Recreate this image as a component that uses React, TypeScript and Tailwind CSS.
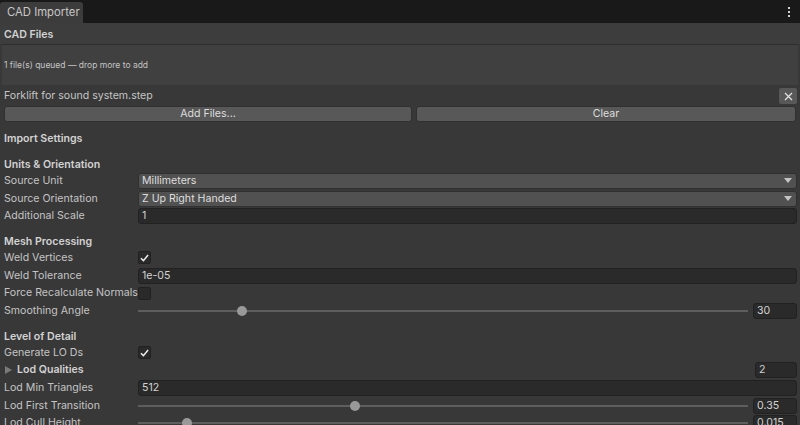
import React from 'react';

const font = { fontFamily: 'Inter, "Noto Sans", sans-serif' };

function Label({ children }: { children: React.ReactNode }) {
  return <div className="w-[134px] shrink-0 whitespace-nowrap text-[#c4c4c4]">{children}</div>;
}

function Header({ children }: { children: React.ReactNode }) {
  return <div className="flex h-[14px] items-center px-1 font-semibold text-[#d2d2d2]">{children}</div>;
}

function Row({ label, children }: { label: string; children: React.ReactNode }) {
  return (
    <div className="flex h-[17.7px] items-center pl-1 pr-[3px]">
      <Label>{label}</Label>
      <div className="flex min-w-0 flex-1 items-center">{children}</div>
    </div>
  );
}

function Dropdown({ value }: { value: string }) {
  return (
    <div className="flex h-[16px] flex-1 items-center justify-between rounded-[3px] border border-[#303030] bg-[#515151] pl-[3px] pr-[4px] text-[#dedede]">
      <span>{value}</span>
      <svg width="8" height="5" viewBox="0 0 8 5">
        <path d="M0 0 L8 0 L4 5 Z" fill="#c4c4c4" />
      </svg>
    </div>
  );
}

function Field({ value, className = 'flex-1' }: { value: string; className?: string }) {
  return (
    <div className={`flex h-[16px] items-center rounded-[3px] border border-[#212121] bg-[#2a2a2a] pl-[3px] text-[#d2d2d2] ${className}`}>
      {value}
    </div>
  );
}

function Check({ on }: { on: boolean }) {
  return (
    <div className="flex h-[13px] w-[13px] items-center justify-center rounded-[2px] border border-[#212121] bg-[#2a2a2a]">
      {on && (
        <svg width="9" height="8" viewBox="0 0 10 9">
          <path d="M1 4.8 L3.8 7.5 L9 1.2" fill="none" stroke="#eeeeee" strokeWidth="1.7" />
        </svg>
      )}
    </div>
  );
}

function Slider({ pct, value }: { pct: number; value: string }) {
  return (
    <div className="flex flex-1 items-center gap-[5px]">
      <div className="relative h-[10px] flex-1">
        <div className="absolute left-0 right-0 top-[4px] h-[2px] bg-[#5e5e5e]" />
        <div
          className="absolute top-0 h-[10px] w-[10px] -translate-x-1/2 rounded-full bg-[#999999]"
          style={{ left: `${pct}%` }}
        />
      </div>
      <Field value={value} className="w-[44px]" />
    </div>
  );
}

export default function App() {
  return (
    <div className="h-[425px] w-[800px] overflow-hidden bg-[#383838] text-[10.6px]" style={font}>
      <div className="flex h-[23px] items-end justify-between bg-[#191919]">
        <div className="flex h-[21px] w-[83px] items-center whitespace-nowrap rounded-t-[3px] bg-[#3c3c3c] pl-[7px] text-[11.3px] text-[#c8c8c8]">
          CAD Importer
        </div>
        <div className="mb-[6px] mr-[10px] flex flex-col gap-[2px]">
          <div className="h-[2px] w-[2px] bg-[#d0d0d0]" />
          <div className="h-[2px] w-[2px] bg-[#d0d0d0]" />
          <div className="h-[2px] w-[2px] bg-[#d0d0d0]" />
        </div>
      </div>

      <div className="flex h-[21px] items-center bg-[#3d3d3d] px-1 pt-[2px] font-semibold text-[#d2d2d2]">CAD Files</div>
      <div className="mx-[2px] flex h-[41px] items-center border-t border-[#2e2e2e] bg-[#404040] px-[2px] text-[8.5px] text-[#c4c4c4]">
        1 file(s) queued — drop more to add
      </div>

      <div className="mt-[2px] flex h-[18px] items-center justify-between pl-1 pr-[3px] text-[#c4c4c4]">
        <span>Forklift for sound system.step</span>
        <div className="flex h-[16px] w-[18px] items-center justify-center rounded-[2px] bg-[#585858]">
          <svg width="9" height="9" viewBox="0 0 9 9">
            <path d="M1 1 L8 8 M8 1 L1 8" stroke="#e0e0e0" strokeWidth="1.3" />
          </svg>
        </div>
      </div>
      <div className="flex gap-[4px] px-1 py-[1px]">
        <div className="flex h-[16px] w-[408px] items-center justify-center rounded-[3px] border border-[#303030] bg-[#585858] text-[#dedede]">
          Add Files...
        </div>
        <div className="flex h-[16px] flex-1 items-center justify-center rounded-[3px] border border-[#303030] bg-[#585858] text-[#dedede]">
          Clear
        </div>
      </div>

      <div className="h-[9px]" />
      <Header>Import Settings</Header>

      <div className="h-[12px]" />
      <Header>Units &amp; Orientation</Header>
      <Row label="Source Unit"><Dropdown value="Millimeters" /></Row>
      <Row label="Source Orientation"><Dropdown value="Z Up Right Handed" /></Row>
      <Row label="Additional Scale"><Field value="1" /></Row>

      <div className="h-[10px]" />
      <Header>Mesh Processing</Header>
      <Row label="Weld Vertices"><Check on /></Row>
      <Row label="Weld Tolerance"><Field value="1e-05" /></Row>
      <Row label="Force Recalculate Normals"><Check on={false} /></Row>
      <Row label="Smoothing Angle"><Slider pct={17} value="30" /></Row>

      <div className="h-[10px]" />
      <Header>Level of Detail</Header>
      <Row label="Generate LO Ds"><Check on /></Row>
      <div className="flex h-[17.7px] items-center pl-1 pr-[3px]">
        <div className="flex flex-1 items-center gap-[5px] font-semibold text-[#d2d2d2]">
          <svg width="7" height="8" viewBox="0 0 7 8" className="ml-[1px]">
            <path d="M0 0 L7 4 L0 8 Z" fill="#7a7a7a" />
          </svg>
          Lod Qualities
        </div>
        <Field value="2" className="w-[42px]" />
      </div>
      <Row label="Lod Min Triangles"><Field value="512" /></Row>
      <Row label="Lod First Transition"><Slider pct={35.5} value="0.35" /></Row>
      <Row label="Lod Cull Height"><Slider pct={8} value="0.015" /></Row>
    </div>
  );
}
